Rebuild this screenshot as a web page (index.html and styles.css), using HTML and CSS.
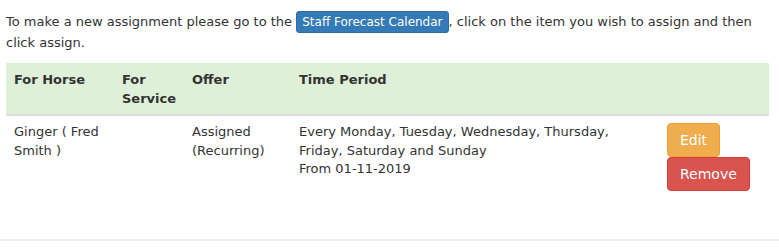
FILE: index.html
```html
<!DOCTYPE html>
<html>
<head>
<meta charset="utf-8">
<link rel="stylesheet" href="styles.css">
</head>
<body>
<div class="page">
  <p class="intro">To make a new assignment please go to the <a class="btn btn-xs btn-primary" href="#">Staff Forecast Calendar</a>, click on the item you wish to assign and then click assign.</p>
  <table class="tbl">
    <colgroup>
      <col class="c-horse">
      <col class="c-service">
      <col class="c-offer">
      <col class="c-period">
      <col class="c-actions">
    </colgroup>
    <thead>
      <tr class="head-row">
        <th>For Horse</th>
        <th>For Service</th>
        <th>Offer</th>
        <th>Time Period</th>
        <th></th>
      </tr>
    </thead>
    <tbody>
      <tr>
        <td>Ginger ( Fred Smith )</td>
        <td></td>
        <td>Assigned (Recurring)</td>
        <td>Every Monday, Tuesday, Wednesday, Thursday, Friday, Saturday and Sunday<br>From 01-11-2019</td>
        <td>
          <div class="actions">
            <a class="btn btn-warning" href="#">Edit</a>
            <a class="btn btn-danger" href="#">Remove</a>
          </div>
        </td>
      </tr>
    </tbody>
  </table>
</div>
<div class="footer-rule"></div>
</body>
</html>
```

FILE: styles.css
```css
html, body {
  margin: 0;
  padding: 0;
  background: #fff;
}
body {
  font-family: "DejaVu Sans", Verdana, sans-serif;
  font-size: 13px;
  line-height: 1.42857;
  color: #333;
}
.page {
  padding: 11px 10px 0 6px;
  height: 239px;
  box-sizing: border-box;
}
.intro {
  margin: 0 0 10px 0;
  line-height: 20px;
}
.btn {
  display: inline-block;
  text-decoration: none;
  border: 1px solid transparent;
  border-radius: 4px;
  font-size: 14px;
  line-height: 20px;
  padding: 6px 12px;
  color: #fff;
  vertical-align: middle;
  white-space: nowrap;
}
.btn-xs {
  font-size: 12px;
  line-height: 18px;
  padding: 1px 5px;
  border-radius: 3px;
}
.btn-primary {
  background: #337ab7;
  border-color: #2e6da4;
}
.btn-warning {
  background: #f0ad4e;
  border-color: #eea236;
}
.btn-danger {
  background: #d9534f;
  border-color: #d43f3a;
}
.tbl {
  width: 763px;
  border-collapse: collapse;
  table-layout: fixed;
}
.c-horse { width: 108px; }
.c-service { width: 70px; }
.c-offer { width: 107px; }
.c-period { width: 368px; }
.c-actions { width: 110px; }
.tbl th, .tbl td {
  padding: 8px;
  vertical-align: top;
  text-align: left;
}
.tbl td {
  padding-top: 7px;
}
.tbl th {
  font-weight: bold;
  color: #333;
  padding-bottom: 6px;
}
.head-row {
  background: #dff0d8;
  border-bottom: 2px solid #ddd;
}
.actions {
  display: flex;
  flex-direction: column;
  align-items: flex-start;
}
.footer-rule {
  border-top: 2px solid #eee;
}
```
